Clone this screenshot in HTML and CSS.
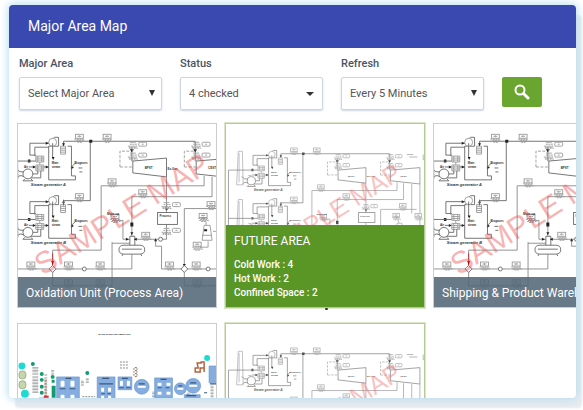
FILE: index.html
```html
<!DOCTYPE html>
<html lang="en">
<head>
<meta charset="utf-8">
<title>Major Area Map</title>
<link rel="stylesheet" href="styles.css">
</head>
<body>
<svg class="defs" aria-hidden="true">
  <defs>
    <g id="tag">
      <rect x="-4" y="-3" width="8" height="4" fill="#fff"/>
      <path d="M-2-1H2M0-2V0M-5 2H5M-4 4H6M-3 3H4M-2 5H3" stroke-dasharray="2 .6"/>
    </g>
    <g id="inlet">
      <path d="M-5 2H5M-4 4H5M-3 0H4M-4 3H4" stroke-dasharray="2 .5"/>
      <rect x="6" y="-2" width="8" height="4" rx="1" fill="#fff"/>
      <path d="M9 0h2M-3-2H3M0 5v2"/>
    </g>
    <g id="generator">
      <path class="dark" d="M41 22H31V56H58V52H54V22H50M41 22V13H37L33 16M46 17V22M31 43H26"/>
      <circle cx="35" cy="18" r="4" fill="#fff"/>
      <path class="dark" d="M31 19H12V31H18M31 23H17V32M35 19V34M12 37H18M11 43H17"/>
      <path d="M43 22H48V30H43ZM43 24H48M43 26H48M43 28H48"/>
      <path class="solid" d="M34 33H37L35.500 36ZM28 17.500L31 19L28 20.500ZM15 41.500L18 43L15 44.500ZM44.500 19H47.500L46 22ZM10 35.500H12.500V38.500H10ZM28 41.500L31 43L28 44.500ZM54 42L56.500 43.500L54 45Z"/>
      <path d="M18 32H26V38H18ZM18 41H26V47H18ZM18 34H26M18 36H26M18 43H26M18 45H26M20 32V38M24 32V38M20 41V47M24 41V47M22 38V41"/>
      <circle class="dark" cx="10" cy="50" r="5" fill="#fff"/>
      <path class="dark" d="M6 53Q2 50-1 54M6 48Q2 49-2 45M13 54H23V47M15 50H20V47M7 55L5 57H15L13 55"/>
      <path d="M-6 14H-1L0 55H-8L-6 14M-5 16V52"/>
      <path class="dark" d="M-18 37H12M54 43L58 39M61 44h4M62 48h3"/>
      <g class="tiny"><text x="34" y="40">Main</text><text x="34" y="44">steam</text><text x="57" y="40">Biogases</text><text x="6" y="44">Air</text></g>
    </g>
    <g id="plant" fill="none" stroke="#999" stroke-width=".9">
      <use href="#generator"/>
      <use href="#generator" y="59"/>
      <g class="tiny gen"><text x="13" y="62">Steam generator A</text><text x="13" y="121">Steam generator B</text></g>
      <path class="dark" d="M46 17H179V22M73 17V77H46V82M-18 37V150"/>
      <path class="pipe" d="M188 52V62H84V127H35V143M196 53V73H115V113M150 53V89M206 54V90M216 54V106M195 85H168V143M195 85H212M200 18h8M203 21h10M220 18v6h5"/>
      <path class="pipe" d="M0 146H95M95 119V163H35V149M95 120H113M95 97H106V116H113M118 116H144M150 101V116H144M139 117V123H145V146H200M115 131V146H95M168 149V163H200"/>
      <path class="dark" d="M116 37L150 34V53L116 49ZM180 37L216 34V54L180 50ZM115 23V37M179 23V37"/>
      <path d="M103 43V27H115M103 43H116M168 43V27H179M168 43H180" stroke-dasharray="3 1.500"/>
      <rect class="dark" x="141" y="89" width="20" height="12" fill="#fff"/>
      <path d="M188 102H194L196 117H186ZM186 112H196M190 98v4M184 119v5h8v-6M197 108h4"/>
      <path class="dark" d="M107 122H123Q128 122 128 126.500T123 131H107Q102 131 102 126.500T107 122ZM113 122V113H118V122M105 126H125M106 131L105 133M124 131L125 133"/>
      <path class="solid" d="M148.500 85H151.500L150 88ZM72 15.500h3v3h-3ZM113 25h4L115 28ZM177 25h4L179 28ZM113.500 99h3v4h-3ZM113.500 109h3L115 112ZM137.500 118L139 115L140.500 118ZM109 114.500L112 116L109 117.500ZM120 114.500v3l-3-1.500ZM166.500 141h3L168 144ZM186 92h3v3h-3ZM188 106h3v2h-3Z"/>
      <path d="M35 130V142" stroke="#b33"/>
      <path d="M33.500 138h3L35 142Z" fill="#911" stroke="none"/>
      <g class="dark" fill="#fff">
        <path d="M35 142.500L38.500 146L35 149.500L31.500 146ZM168 142.500L171.500 146L168 149.500L164.500 146Z"/>
        <circle cx="67" cy="146" r="2"/><circle cx="192" cy="146" r="2"/><circle cx="144" cy="116" r="2"/>
      </g>
      <use href="#tag" x="62" y="13"/><use href="#tag" x="90" y="13"/><use href="#tag" x="62" y="73"/>
      <use href="#tag" x="95" y="58"/><use href="#tag" x="126" y="69"/><use href="#tag" x="195" y="81"/>
      <use href="#tag" x="98" y="94"/><use href="#tag" x="129" y="112"/><use href="#tag" x="181" y="122"/>
      <use href="#tag" x="13" y="142"/><use href="#tag" x="51" y="142"/><use href="#tag" x="83" y="142"/>
      <use href="#tag" x="153" y="142"/><use href="#tag" x="180" y="142"/><use href="#tag" x="51" y="160"/><use href="#tag" x="83" y="160"/>
      <use href="#tag" x="181" y="160"/><use href="#tag" x="187" y="93"/><use href="#tag" x="214" y="93"/>
      <use href="#inlet" x="116" y="20"/><use href="#inlet" x="116" y="31"/><use href="#inlet" x="180" y="20"/><use href="#inlet" x="180" y="31"/>
      <use href="#inlet" x="150" y="81"/><use href="#inlet" x="150" y="107"/>
      <g class="tiny"><text x="128" y="45">BPST</text><text x="192" y="45">CEST</text><text x="143" y="94">Process</text><text x="151" y="46">Ex-Gas</text><text x="90" y="92">Make-up</text></g>
      <text class="watermark" transform="translate(25 153) rotate(-32)">SAMPLE MAP</text>
    </g>
  </defs>
</svg>

<main class="panel">
  <header class="panel-head"><h1>Major Area Map</h1></header>
  <form class="filters">
    <div class="field">
      <label for="area">Major Area</label>
      <div class="select"><select id="area"><option>Select Major Area</option></select></div>
    </div>
    <div class="field">
      <label for="status">Status</label>
      <div class="select caret"><select id="status"><option>4 checked</option></select></div>
    </div>
    <div class="field">
      <label for="refresh">Refresh</label>
      <div class="select"><select id="refresh"><option>Every 5 Minutes</option></select></div>
    </div>
    <button class="search" type="button" aria-label="Search">
      <svg viewBox="0 0 16 16" width="16" height="16" fill="none" stroke="#fff"><circle cx="6" cy="6" r="4.500" stroke-width="2"/><path d="M9.500 9.500L14 14" stroke-width="3" stroke-linecap="round"/></svg>
    </button>
  </form>

  <section class="cards">
    <article class="card">
      <svg class="map" viewBox="0 0 200 184"><use href="#plant"/></svg>
      <h2 class="caption">Oxidation Unit (Process Area)</h2>
    </article>
    <article class="card active marked">
      <svg class="map" viewBox="-21 -19 242 223"><use href="#plant"/></svg>
      <div class="details">
        <h2>FUTURE AREA</h2>
        <p>Cold Work : 4</p>
        <p>Hot Work : 2</p>
        <p>Confined Space : 2</p>
      </div>
    </article>
    <article class="card">
      <svg class="map" viewBox="0 0 200 184"><use href="#plant"/></svg>
      <h2 class="caption">Shipping &amp; Product Warehouse</h2>
    </article>
    <article class="card">
      <svg class="map" viewBox="0 0 200 184">
        <text class="unit-title" x="81" y="11">WASTE WATER TREATMENT UNIT</text>
        <g fill="#1ddbd3"><circle cx="4" cy="42" r="3.500"/><circle cx="7" cy="70" r="4"/><circle cx="191" cy="34" r="3"/></g>
        <g fill="#129b70"><circle cx="15" cy="40" r="2"/><circle cx="24" cy="50" r="2"/><circle cx="24" cy="56" r="2"/><circle cx="24" cy="63" r="2"/><circle cx="24" cy="69" r="2"/><circle cx="35" cy="53" r="2"/><circle cx="70" cy="49" r="2"/><path d="M34 62h4v12h-4zM34 56h3v3h-3z"/></g>
        <g fill="#c5d5ae" stroke="#8c9c78" stroke-width=".7"><rect x="1" y="47" width="7" height="8" rx="3"/><rect x="1" y="57" width="7" height="8" rx="3"/></g>
        <g stroke="#999" stroke-width="3" stroke-dasharray=".7 .8"><path d="M16 43V70M19 43V70M28 50V76M35 46V51M70 54V60M65 57V62M137 68V76M172 69V78M196 62V76"/></g>
        <path d="M28 56V75M119 43V53" stroke="#b97557" stroke-width="2" stroke-dasharray="1 2"/>
        <path d="M26 73h5M21 75h5" stroke="#c33" stroke-width="2"/>
        <path d="M103 38h8M103 41h8M103 44h8M116 45h6M116 48h6M116 51h6M65 73h13" stroke="#888" stroke-dasharray="2 1"/>
        <g fill="#86ade0" stroke="#6791c8" stroke-width=".6">
          <path d="M39 53H62V90H39ZM80 53H98V90H80ZM101 53H115V66H101ZM138 54H156V74H138ZM193 42H201V59H193ZM168 71H184V80H168Z"/>
          <circle cx="125" cy="63" r="7.500"/><circle cx="164" cy="65" r="6"/><circle cx="177" cy="62" r="7.500"/>
        </g>
        <g fill="#fff"><rect x="43" y="57" width="4" height="6" rx="1"/><rect x="53" y="57" width="4" height="6" rx="1"/><rect x="43" y="71" width="4" height="6" rx="1"/><rect x="53" y="71" width="4" height="6" rx="1"/><rect x="84" y="64" width="3" height="4"/><rect x="91" y="64" width="3" height="4"/><rect x="84" y="72" width="3" height="4"/><rect x="91" y="72" width="3" height="4"/><rect x="103" y="57" width="3" height="5"/><rect x="110" y="57" width="3" height="5"/><rect x="141" y="59" width="4" height="3"/><rect x="150" y="59" width="4" height="3"/><rect x="141" y="68" width="4" height="3"/><rect x="150" y="68" width="4" height="3"/><rect x="121" y="62" width="8" height="2"/><rect x="161" y="64" width="6" height="2"/><rect x="173" y="61" width="8" height="2"/></g>
        <path d="M48 54.500h6M85 54.500h7M82 60h14M42 65h6M52 65h6M84 70h4M90 70h4M105 54.500h6M102 64h5M109 64h5M144 55.500h6M141 64h4M149 64h4M122 60h6M162 62h4M174 59h6M170 72h10M194 60h6M188 69h3" stroke="#38587e" stroke-width="1.200"/>
        <path d="M181 39h4v-1h3v6h-4v4h-5v-4h3ZM184 44h4v4" fill="none" stroke="#b5613a" stroke-width="1.500"/>
      </svg>
    </article>
    <article class="card active">
      <svg class="map" viewBox="-21 -19 242 223"><use href="#plant"/></svg>
    </article>
  </section>
</main>
</body>
</html>
```
FILE: styles.css
```css
* { box-sizing: border-box; }

body {
  margin: 0;
  height: 100vh;
  padding: 5px 7px 12px 9px;
  background: #fff;
  color: #4a5463;
  font-family: Roboto, "Liberation Sans", sans-serif;
  font-size: 12px;
  overflow: hidden;
}

h1, h2, p { margin: 0; font-weight: 400; }

.defs { position: absolute; width: 0; height: 0; }

.panel {
  height: 100%;
  overflow: hidden;
  background: #fff;
  border-radius: 4px;
  box-shadow: 0 0 8px 1px #b4dcf0, 6px 10px 2px #e6ebef;
}

.panel-head {
  padding: 0 19px;
  background: #3949b0;
  color: #fff;
}

.panel-head h1 { font-size: 14px; line-height: 43px; }

.filters {
  display: flex;
  align-items: flex-end;
  gap: 18px;
  padding: 8px 10px 0;
}

.field { width: 143px; }

.field label {
  display: block;
  margin-bottom: 5px;
  font-size: 11px;
  font-weight: 500;
  line-height: 16px;
}

.select { position: relative; }

.select select {
  display: block;
  width: 100%;
  height: 33px;
  padding: 0 8px;
  appearance: none;
  border: 1px solid #ccd6e2;
  border-radius: 2px;
  background: #fff;
  box-shadow: 0 1px 2px #ccd6e2;
  color: #555;
  font: inherit;
  font-size: 11px;
}

.select::after {
  content: "";
  position: absolute;
  top: 13px;
  right: 7px;
  border: 3px solid transparent;
  border-top: 6px solid #333;
  border-bottom: 0;
}

.select.caret::after {
  top: 15px;
  right: 9px;
  border-width: 4px 4px 0;
}

.search {
  display: grid;
  place-items: center;
  width: 40px;
  height: 30px;
  margin-bottom: 3px;
  padding: 0;
  border: 0;
  border-radius: 2px;
  background: #6aa52f;
}

.cards {
  display: grid;
  grid-template-columns: repeat(3, 200px);
  gap: 15px 8px;
  padding: 13px 8px;
}

.card {
  position: relative;
  height: 185px;
  border: 1px solid #ccc;
  background: #fff;
}

.card.active { border-color: #b5ca94; box-shadow: 0 0 0 1px #dbe6ca; }
.card.active .map { opacity: .8; }

.card.marked::after {
  content: "";
  position: absolute;
  bottom: -3px;
  left: 50%;
  width: 3px;
  height: 2px;
  border-radius: 2px;
  background: #333;
}

.map { display: block; width: 100%; height: 100%; }

.map, .defs { font-family: "Liberation Sans", sans-serif; }

.dark { stroke: #666; }
.pipe { stroke: #888; }
.solid { fill: #222; stroke: none; }
.tiny { fill: #333; stroke: none; font-size: 3px; font-weight: 700; }
.gen { font-size: 4px; font-style: italic; }
.watermark { fill: #ee4848; fill-opacity: .42; stroke: none; font-size: 31px; }
.unit-title { fill: #222; font-size: 2px; font-weight: 700; }

.caption, .details {
  position: absolute;
  right: 0;
  bottom: 0;
  left: 0;
  padding: 0 8px;
  color: #fff;
}

.caption {
  padding-top: 2px;
  background: rgba(82, 101, 117, .87);
  font-size: 12px;
  line-height: 28px;
  white-space: nowrap;
}

.details {
  padding: 7px 8px;
  background: #5a9625;
}

.details h2 {
  margin-bottom: 8px;
  font-size: 12px;
  line-height: 18px;
}

.details p { font-size: 10px; font-weight: 500; line-height: 14px; }
```
